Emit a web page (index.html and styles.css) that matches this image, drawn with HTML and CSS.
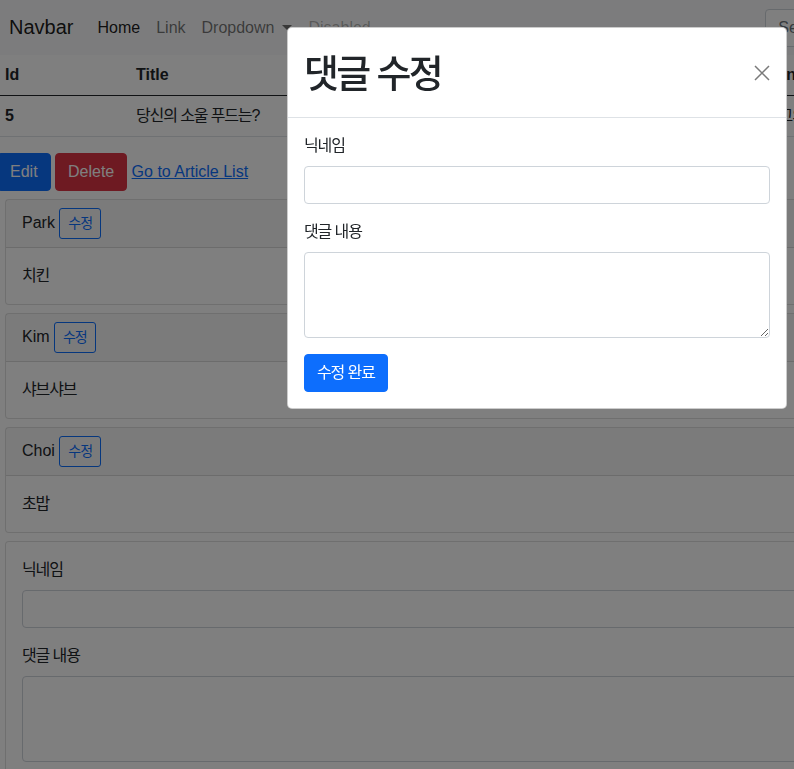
FILE: index.html
```html
<!DOCTYPE html>
<html lang="ko">
<head>
<meta charset="utf-8">
<title>Article</title>
<link rel="stylesheet" href="styles.css">
</head>
<body>
<div class="page">
  <nav class="navbar">
    <a class="brand" href="#">Navbar</a>
    <ul class="nav">
      <li><a class="nav-link active" href="#">Home</a></li>
      <li><a class="nav-link" href="#">Link</a></li>
      <li><a class="nav-link dropdown-toggle" href="#">Dropdown</a></li>
      <li><a class="nav-link disabled" href="#">Disabled</a></li>
    </ul>
    <form class="search">
      <input class="search-input" type="search" placeholder="Search">
      <button class="btn btn-outline-success" type="button">Search</button>
    </form>
  </nav>

  <table class="table">
    <colgroup>
      <col class="col-id">
      <col class="col-title">
      <col>
    </colgroup>
    <thead>
      <tr><th>Id</th><th>Title</th><th>Content</th></tr>
    </thead>
    <tbody>
      <tr><td class="bold">5</td><td class="ko">당신의 소울 푸드는?</td><td class="ko">최고의 음식은 무엇인가요?</td></tr>
    </tbody>
  </table>

  <div class="actions">
    <a class="btn btn-primary" href="#">Edit</a>
    <a class="btn btn-danger" href="#">Delete</a>
    <a class="link" href="#">Go to Article List</a>
  </div>

  <div class="comments">
    <div class="card">
      <div class="card-header">Park <button class="btn-sm ko" type="button">수정</button></div>
      <div class="card-body ko">치킨</div>
    </div>
    <div class="card">
      <div class="card-header">Kim <button class="btn-sm ko" type="button">수정</button></div>
      <div class="card-body ko">샤브샤브</div>
    </div>
    <div class="card">
      <div class="card-header">Choi <button class="btn-sm ko" type="button">수정</button></div>
      <div class="card-body ko">초밥</div>
    </div>
    <div class="card">
      <form class="card-body">
        <label class="form-label ko">닉네임</label>
        <input class="form-control" type="text">
        <label class="form-label ko gap">댓글 내용</label>
        <textarea class="form-control area" rows="3"></textarea>
      </form>
    </div>
  </div>
</div>

<div class="modal">
  <div class="dialog">
    <div class="modal-header">
      <h1 class="modal-title ko">댓글 수정</h1>
      <button class="btn-close" type="button" aria-label="Close">
        <svg width="16" height="16" viewBox="0 0 16 16"><path d="M1 1 L15 15 M15 1 L1 15" stroke="#7a7a7a" stroke-width="1.5" fill="none"/></svg>
      </button>
    </div>
    <div class="modal-body">
      <label class="form-label ko">닉네임</label>
      <input class="form-control" type="text">
      <label class="form-label ko gap">댓글 내용</label>
      <textarea class="form-control area" rows="3"></textarea>
      <button class="btn btn-primary submit ko" type="button">수정 완료</button>
    </div>
  </div>
</div>
</body>
</html>
```
FILE: styles.css
```css
* { box-sizing: border-box; }

html, body {
  margin: 0;
  padding: 0;
  overflow: hidden;
  height: 100%;
}

body {
  font-family: "Liberation Sans", "Noto Sans CJK KR", Arial, sans-serif;
  font-size: 16px;
  line-height: 24px;
  color: #212529;
  background: #fff;
}

.ko { letter-spacing: -0.07em; }

.page {
  width: 1076px;
  margin-left: -3px;
}

/* navbar */
.navbar {
  height: 55px;
  background: #f8f9fa;
  display: flex;
  align-items: center;
  padding: 0 12px;
}
.brand {
  font-size: 20px;
  line-height: 30px;
  color: rgba(0,0,0,.9);
  text-decoration: none;
  margin-right: 16px;
  margin-top: -2px;
}
.nav {
  list-style: none;
  margin: 0;
  padding: 0;
  display: flex;
  flex: 1;
}
.nav-link {
  display: block;
  padding: 8px;
  color: rgba(0,0,0,.55);
  text-decoration: none;
}
.nav-link.active { color: rgba(0,0,0,.9); }
.nav-link.disabled { color: rgba(0,0,0,.3); }
.dropdown-toggle::after {
  content: "";
  display: inline-block;
  margin-left: 8px;
  vertical-align: 3px;
  border-top: 5px solid;
  border-left: 5px solid transparent;
  border-right: 5px solid transparent;
}
.search {
  display: flex;
  gap: 8px;
}
.search-input {
  width: 211px;
  height: 38px;
  border: 1px solid #ced4da;
  border-radius: 4px;
  padding: 6px 12px;
  font: inherit;
  color: #212529;
}
.search-input::placeholder { color: #6c757d; }

/* buttons */
.btn {
  display: inline-block;
  height: 38px;
  padding: 6px 12px;
  border: 1px solid transparent;
  border-radius: 4px;
  font: inherit;
  line-height: 24px;
  text-decoration: none;
  white-space: nowrap;
}
.btn.ko { letter-spacing: -0.07em; }
.btn-primary { background: #0d6efd; border-color: #0d6efd; color: #fff; }
.btn-danger { background: #dc3545; border-color: #dc3545; color: #fff; }
.btn-outline-success { background: #fff; border-color: #198754; color: #198754; }

/* table */
.table {
  width: 100%;
  border-collapse: collapse;
  margin-bottom: 16px;
}
.col-id { width: 131px; }
.col-title { width: 629px; }
.table th, .table td {
  padding: 8px;
  text-align: left;
  vertical-align: top;
  border-bottom: 1px solid #dee2e6;
  white-space: nowrap;
}
.table thead th {
  font-weight: bold;
  border-bottom: 1px solid #212529;
}
.bold { font-weight: bold; }

.actions {
  display: flex;
  align-items: center;
  gap: 4.4px;
  margin-bottom: 8px;
}
.link {
  color: #0d6efd;
  text-decoration: underline;
}

/* cards */
.comments {
  margin: 0 8px;
}
.card {
  border: 1px solid rgba(0,0,0,.125);
  border-radius: 4px;
  margin-bottom: 8px;
  background: #fff;
}
.card-header {
  display: flex;
  align-items: baseline;
  gap: 4.4px;
  padding: 8px 16px;
  background: rgba(0,0,0,.03);
  border-bottom: 1px solid rgba(0,0,0,.125);
}
.card-body {
  display: block;
  padding: 16px;
}
.btn-sm {
  height: 31px;
  padding: 4px 8px;
  font-family: inherit;
  font-size: 14px;
  line-height: 21px;
  border: 1px solid #0d6efd;
  border-radius: 3px;
  color: #0d6efd;
  background: transparent;
}

/* forms */
.form-label {
  display: block;
  margin-bottom: 8px;
}
.form-label.gap { margin-top: 16px; }
.form-control {
  display: block;
  width: 100%;
  height: 38px;
  padding: 6px 12px;
  border: 1px solid #ced4da;
  border-radius: 4px;
  font: inherit;
  color: #212529;
  background: #fff;
}
.form-control.area {
  height: 86px;
  resize: vertical;
}

/* modal */
.modal {
  position: fixed;
  inset: 0;
  background: rgba(0,0,0,.5);
  overflow: hidden;
}
.dialog {
  width: 500px;
  margin: 27px 0 0 287px;
  background: #fff;
  border: 1px solid rgba(0,0,0,.2);
  border-radius: 5px;
}
.modal-header {
  height: 90px;
  display: flex;
  align-items: center;
  justify-content: space-between;
  padding: 2px 16px 0;
  border-bottom: 1px solid #dee2e6;
}
.modal-title {
  margin: 0;
  font-size: 38px;
  line-height: 46px;
  font-weight: 500;
}
.btn-close {
  width: 16px;
  height: 16px;
  padding: 0;
  margin: -2px 0 0;
  border: 0;
  background: transparent;
  display: flex;
}
.modal-body {
  padding: 16px;
}
.submit {
  margin-top: 16px;
}
```
